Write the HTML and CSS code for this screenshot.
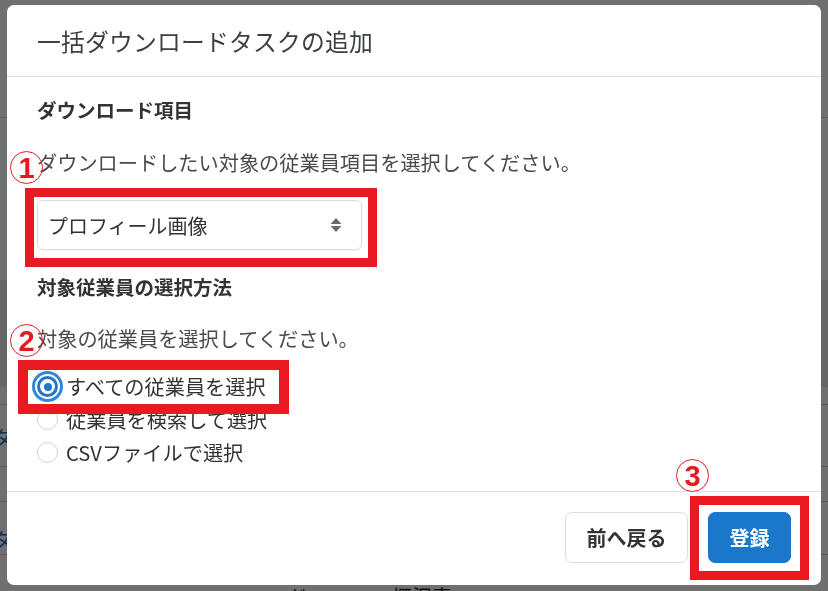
FILE: index.html
```html
<!DOCTYPE html>
<html lang="ja">
<head>
<meta charset="utf-8">
<title>一括ダウンロードタスクの追加</title>
<link rel="stylesheet" href="styles.css">
</head>
<body>
<div class="page">
  <div class="bg-row r1"></div>
  <div class="bg-row r2"></div>
  <div class="bg-row r3"></div>
  <div class="bg-row r4"></div>
  <div class="bg-row r5"><span class="bg-link">タ</span></div>
  <div class="bg-row r6"></div>
  <div class="bg-row r7"><span class="bg-link">タ</span></div>
  <div class="bg-bottom"><span class="c1">ード</span><span class="c2">概況表</span></div>
</div>

<div class="overlay">
  <div class="modal">
    <div class="modal-header">
      <h2 class="title">一括ダウンロードタスクの追加</h2>
    </div>
    <div class="modal-body">
      <h3 class="section-title">ダウンロード項目</h3>
      <p class="desc">ダウンロードしたい対象の従業員項目を選択してください。</p>
      <div class="select">
        <span class="select-value">プロフィール画像</span>
        <svg class="select-arrow" width="12" height="16" viewBox="0 0 12 16" aria-hidden="true">
          <path d="M6 1 L11.5 7 H0.5 Z" fill="#6b6b6b"/>
          <path d="M6 15 L11.5 9 H0.5 Z" fill="#6b6b6b"/>
        </svg>
      </div>
      <h3 class="section-title second">対象従業員の選択方法</h3>
      <p class="desc desc2">対象の従業員を選択してください。</p>
      <div class="radios">
        <label class="radio"><span class="mark checked"></span><span class="label-text">すべての従業員を選択</span></label>
        <label class="radio"><span class="mark"></span><span class="label-text">従業員を検索して選択</span></label>
        <label class="radio"><span class="mark"></span><span class="label-text">CSVファイルで選択</span></label>
      </div>
    </div>
    <div class="modal-footer">
      <button class="btn">前へ戻る</button>
      <button class="btn primary">登録</button>
    </div>
  </div>

  <div class="anno box1"></div>
  <div class="anno box2"></div>
  <div class="anno box3"></div>
  <span class="num n1"><span class="digit">1</span></span>
  <span class="num n2"><span class="digit">2</span></span>
  <span class="num n3"><span class="digit">3</span></span>
</div>
</body>
</html>
```

FILE: styles.css
```css
* { box-sizing: border-box; }

html, body {
  margin: 0;
  padding: 0;
  width: 828px;
  height: 591px;
  overflow: hidden;
  font-family: "Noto Sans CJK JP", "Noto Sans", sans-serif;
  background: #ffffff;
}

/* background page (under overlay) */
.page {
  display: flex;
  flex-direction: column;
  width: 828px;
}
.bg-row {
  border-bottom: 1px solid #d4d4d4;
  display: flex;
  align-items: flex-end;
}
.r1 { height: 118px; }
.r2 { height: 162px; border-bottom: none; }
.r3 { height: 107px; background: #e9e9e9; border-bottom: none; }
.r4 { height: 18px; border-bottom-color: #b9c9da; }
.r5 { height: 62px; padding-bottom: 14px; border-bottom-color: #b9c9da; }
.r6 { height: 35px; border-bottom-color: #b9c9da; }
.r7 { height: 53px; padding-bottom: 0; border-bottom-color: #b9c9da; }
.bg-link {
  color: #1a6fc0;
  font-size: 20px;
  line-height: 28px;
  margin-left: -8px;
}
.bg-bottom {
  margin-top: 27px;
  height: 30px;
  font-size: 20px;
  line-height: 30px;
  color: #222;
  display: flex;
}
.bg-bottom .c1 { margin-left: 268px; }
.bg-bottom .c2 { margin-left: 84px; }

/* overlay */
.overlay {
  position: fixed;
  inset: 0;
  background: rgba(0, 0, 0, 0.56);
  padding: 5px 7px 6px 7px;
  display: flex;
}

.modal {
  width: 814px;
  height: 580px;
  background: #fff;
  border-radius: 7px;
  display: flex;
  flex-direction: column;
  overflow: hidden;
}

.modal-header {
  height: 72px;
  padding: 20px 30px 0;
  border-bottom: 1px solid #e2e2e0;
}
.title {
  margin: 0;
  font-size: 23.8px;
  line-height: 32px;
  font-weight: 400;
  color: #3c3f44;
  letter-spacing: 0.2px;
}

.modal-body {
  flex: 1;
  padding: 19px 30px 0;
  display: flex;
  flex-direction: column;
  align-items: flex-start;
}
.section-title {
  margin: 0;
  font-size: 19.5px;
  line-height: 28px;
  font-weight: 700;
  color: #333;
}
.section-title.second { margin-top: 23px; }
.desc {
  margin: 25px 0 0;
  font-size: 20.2px;
  line-height: 28px;
  color: #4a4a4a;
}
.desc2 { margin-top: 24px; }

.select {
  margin-top: 23px;
  width: 325px;
  height: 50px;
  border: 1px solid #dcdcdc;
  border-radius: 6px;
  display: flex;
  align-items: center;
  justify-content: space-between;
  padding: 0 19px 0 10px;
  box-shadow: 0 1px 1px rgba(0,0,0,0.04);
}
.select-value {
  font-size: 20px;
  color: #333;
}
.select-arrow { display: block; }

.radios {
  margin-top: 17px;
  display: flex;
  flex-direction: column;
}
.radio {
  height: 33px;
  display: flex;
  align-items: center;
  gap: 8px;
  font-size: 20.2px;
  color: #333;
}
.mark {
  width: 21px;
  height: 21px;
  border-radius: 50%;
  border: 1px solid #d2d2d2;
  background: #fff;
  flex: none;
  margin-left: 0;
}
.mark.checked {
  border: 3px solid #1f78c8;
  box-shadow: 0 0 0 2px #fff, 0 0 0 5px #3388d6;
  display: flex;
  align-items: center;
  justify-content: center;
}
.mark.checked::after {
  content: "";
  width: 8px;
  height: 8px;
  border-radius: 50%;
  background: #1f78c8;
}
.label-text { line-height: 28px; }

.modal-footer {
  height: 94px;
  border-top: 1px solid #e2e2e0;
  display: flex;
  justify-content: flex-end;
  align-items: flex-start;
  gap: 20px;
  padding: 20px 30px 0;
}
.btn {
  height: 51px;
  border-radius: 7px;
  border: 1px solid #dedede;
  background: #fff;
  font-family: "Noto Sans CJK JP", "Noto Sans", sans-serif;
  font-size: 20px;
  font-weight: 700;
  color: #333;
  padding: 0;
  width: 123px;
}
.btn.primary {
  width: 83px;
  background: #1b77c9;
  border-color: #1b77c9;
  color: #fff;
}

/* annotations */
.anno {
  position: absolute;
  border: 9px solid #e8191f;
}
.box1 { left: 25px; top: 188px; width: 352px; height: 79px; }
.box2 { left: 18px; top: 360px; width: 271px; height: 54px; border-width: 10px; }
.box3 { left: 690px; top: 496px; width: 119px; height: 84px; }

.num {
  position: absolute;
  width: 33px;
  height: 33px;
  border: 1.5px solid #e8191f;
  border-radius: 50%;
  display: flex;
  align-items: center;
  justify-content: center;
  color: #e8191f;
}
.digit {
  font-family: "Liberation Sans", "Noto Sans", sans-serif;
  font-weight: 700;
  font-size: 29px;
  line-height: 1;
  margin-top: 1px;
}
.n1 { left: 10px; top: 151px; }
.n2 { left: 10px; top: 324px; }
.n3 { left: 676px; top: 459px; }
```
